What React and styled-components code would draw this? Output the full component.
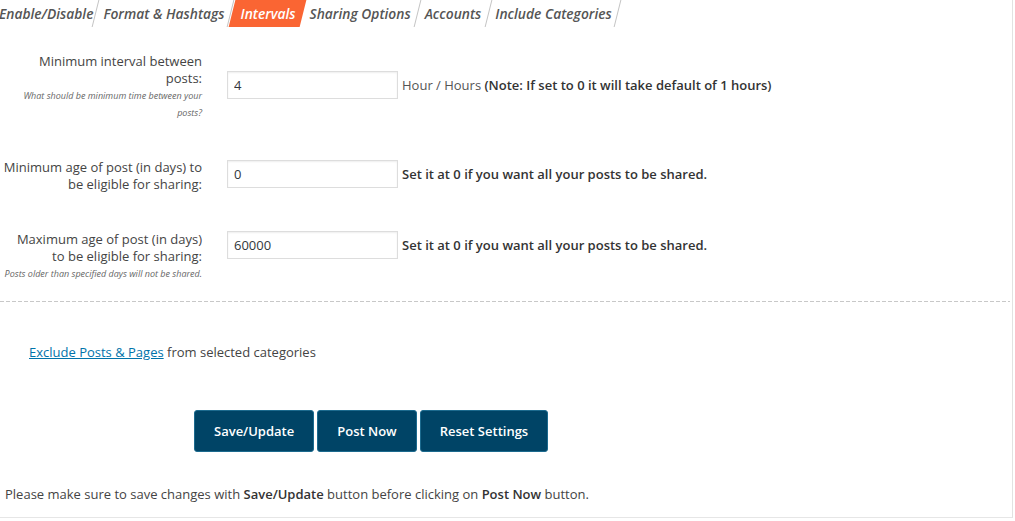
import React from "react";
import styled, { createGlobalStyle } from "styled-components";

const tabs = ["Enable/Disable", "Format & Hashtags", "Intervals", "Sharing Options", "Accounts", "Include Categories"];

const rows = [
  {
    label: "Minimum interval between posts:",
    note: "What should be minimum time between your posts?",
    value: "4",
    offset: 18,
    hint: (
      <>
        Hour / Hours <b>(Note: If set to 0 it will take default of 1 hours)</b>
      </>
    ),
  },
  {
    label: "Minimum age of post (in days) to be eligible for sharing:",
    value: "0",
    offset: 1,
    hint: <b>Set it at 0 if you want all your posts to be shared.</b>,
  },
  {
    label: "Maximum age of post (in days) to be eligible for sharing:",
    note: "Posts older than specified days will not be shared.",
    value: "60000",
    offset: 0,
    hint: <b>Set it at 0 if you want all your posts to be shared.</b>,
  },
];

const App = () => {
  return (
    <>
      <GlobalStyle />
      <Panel>
        <Tabs>
          {tabs.map((tab, i) => (
            <Tab key={tab} $active={tab === "Intervals"} $first={i === 0}>
              <span>{tab}</span>
            </Tab>
          ))}
        </Tabs>
        <Form>
          {rows.map((row) => (
            <Row key={row.label}>
              <Label>
                {row.label}
                {row.note && <Note>{row.note}</Note>}
              </Label>
              <Field $offset={row.offset}>
                <Input defaultValue={row.value} />
                <Hint>{row.hint}</Hint>
              </Field>
            </Row>
          ))}
        </Form>
        <Divider />
        <Exclude>
          <a href="#">Exclude Posts &amp; Pages</a> from selected categories
        </Exclude>
        <Buttons>
          <Button>Save/Update</Button>
          <Button>Post Now</Button>
          <Button>Reset Settings</Button>
        </Buttons>
        <Footer>
          Please make sure to save changes with <b>Save/Update</b> button before clicking on <b>Post Now</b> button.
        </Footer>
      </Panel>
    </>
  );
};

const GlobalStyle = createGlobalStyle`
  body {
    margin: 0;
    background: #fff;
    font-family: "Open Sans", "Liberation Sans", sans-serif;
    color: #444;
    overflow: hidden;
  }
`;

const Panel = styled.div`
  width: 1012px;
  height: 517px;
  border-right: 1px solid #e2e2e2;
  border-bottom: 1px solid #e6e6e6;
  overflow: hidden;
`;

const Tabs = styled.div`
  display: flex;
  height: 27px;
  margin-left: -8px;
`;

const Tab = styled.div`
  position: relative;
  display: flex;
  align-items: center;
  padding: 0 ${(p) => (p.$active ? "7px" : p.$first ? "3px" : "7px")} 0 ${(p) => (p.$active ? "9px" : "7px")};
  font-size: 13.8px;
  font-style: italic;
  font-weight: 600;
  color: ${(p) => (p.$active ? "#fff" : "#555")};
  white-space: nowrap;

  span {
    position: relative;
    z-index: 1;
    padding-bottom: 1px;
  }

  &::before {
    content: "";
    position: absolute;
    inset: 0;
    transform: skewX(-14deg);
    background: ${(p) => (p.$active ? "#fa6533" : "transparent")};
    border-right: ${(p) => (p.$active ? "none" : "1px solid #c4c4c4")};
  }
`;

const Form = styled.div`
  display: flex;
  flex-direction: column;
  gap: 38px;
  padding: 26px 0 0 2px;
`;

const Row = styled.div`
  display: grid;
  grid-template-columns: 200px 1fr;
  column-gap: 25px;
  align-items: start;
`;

const Label = styled.div`
  text-align: right;
  font-size: 13px;
  line-height: 17px;
  color: #444;
`;

const Note = styled.div`
  font-size: 9px;
  font-style: italic;
  color: #666;
  line-height: 17px;
`;

const Field = styled.div`
  display: flex;
  align-items: center;
  margin-top: ${(p) => p.$offset}px;
`;

const Input = styled.input`
  box-sizing: border-box;
  width: 171px;
  height: 28px;
  padding: 0 6px;
  border: 1px solid #ddd;
  box-shadow: inset 0 1px 2px rgba(0, 0, 0, 0.07);
  font-family: "Open Sans", sans-serif;
  font-size: 13px;
  color: #32373c;
  outline: none;
`;

const Hint = styled.span`
  margin-left: 4px;
  font-size: 13px;
  color: #555;

  b {
    font-weight: 600;
    color: #333;
  }
`;

const Divider = styled.div`
  margin-top: 19px;
  height: 1px;
  width: 1010px;
  background: repeating-linear-gradient(to right, #c8c8c8 0 4px, transparent 4px 6px);
`;

const Exclude = styled.div`
  margin-top: 42px;
  padding-left: 29px;
  font-size: 13px;
  line-height: 17px;
  color: #444;

  a {
    color: #0073aa;
    text-decoration: underline;
  }
`;

const Buttons = styled.div`
  display: flex;
  gap: 3px;
  margin-top: 49px;
  padding-left: 194px;
`;

const Button = styled.button`
  height: 42px;
  padding: 0 19px;
  background: #004466;
  border: 1px solid #1c6a8e;
  border-radius: 3px;
  color: #fff;
  font-family: "Open Sans", sans-serif;
  font-size: 13px;
  font-weight: 600;
  cursor: pointer;
`;

const Footer = styled.div`
  margin-top: 34px;
  padding-left: 5px;
  font-size: 13px;
  line-height: 17px;
  color: #444;

  b {
    font-weight: 600;
    color: #333;
  }
`;

export default App;
